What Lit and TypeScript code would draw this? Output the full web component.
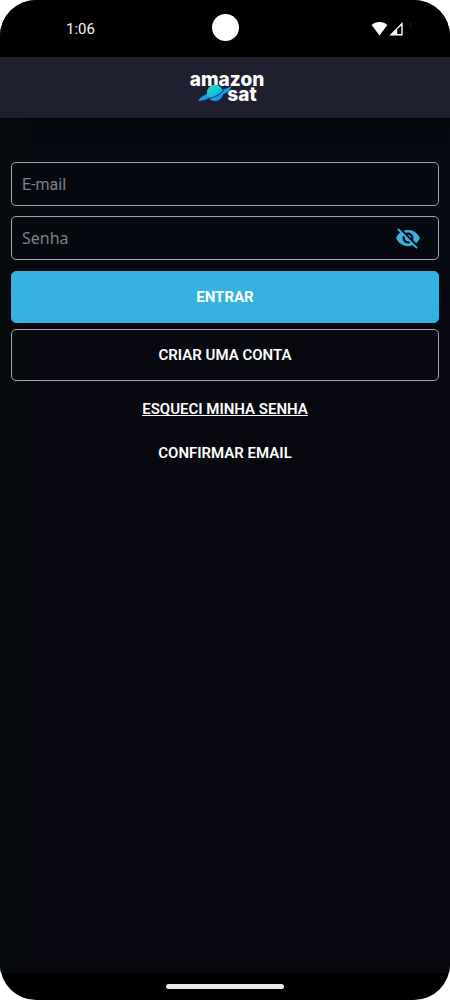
import { LitElement, html, css } from "lit";
import { customElement, state } from "lit/decorators.js";

@customElement("status-bar")
class StatusBar extends LitElement {
  static styles = css`
    :host {
      display: grid;
      grid-template-columns: 1fr auto 1fr;
      align-items: center;
      height: 57px;
      box-sizing: border-box;
      padding: 0 36px 0 66px;
      background: #000;
      color: #f4f4f4;
      font-size: 15px;
      position: relative;
    }
    .icons {
      grid-column: 3;
      justify-self: end;
      display: block;
    }
    .camera {
      position: absolute;
      left: 50%;
      top: 14px;
      width: 27px;
      height: 27px;
      margin-left: -13px;
      border-radius: 50%;
      background: #fff;
    }
  `;

  render() {
    return html`
      <span>1:06</span>
      <span class="camera"></span>
      <svg class="icons" width="43" height="16" viewBox="0 0 43 16" aria-hidden="true">
        <path fill="#fff" d="M0.6 4C4.6 -0.1 12.400 -0.1 16.400 4L8.500 14.400Z" />
        <path fill="#fff" fill-rule="evenodd" d="M18.300 14.500L31.700 1V14.500ZM26.200 8.300V13H30.300V4.400Z" />
        <path fill="#333" d="M39 2h1v1.500h-1zM39 5h1v1.500h-1z" />
      </svg>
    `;
  }
}

@customElement("brand-logo")
class BrandLogo extends LitElement {
  static styles = css`
    :host {
      display: block;
    }
    .logo {
      display: block;
    }
    .word {
      fill: #fff;
      font: 800 19px Inter, sans-serif;
    }
  `;

  render() {
    return html`
      <svg class="logo" width="84" height="42" viewBox="0 0 84 42" role="img" aria-label="amazon sat">
        <defs>
          <linearGradient id="planet" x1="0" y1="0" x2="0.7" y2="1">
            <stop offset="0.1" stop-color="#22e0a8" />
            <stop offset="0.5" stop-color="#14c4dc" />
            <stop offset="1" stop-color="#1688f0" />
          </linearGradient>
        </defs>
        <text class="word" x="44" y="19" text-anchor="middle">amazon</text>
        <path
          fill="#189ee8"
          d="M15 34C16.500 31 20 28.500 24 27L40 22.500C43 21.800 46 20.500 48.500 19.500C47 23.500 43 26.500 39 28L23 32.500C20.500 33 17.500 34 15 34Z"
        />
        <circle cx="32" cy="26" r="8.200" fill="url(#planet)" />
        <path fill="none" stroke="#1e1f2f" stroke-width="0.9" d="M24.500 31.500C31 31 38 27.500 41 22.500" />
        <text class="word" x="59" y="34" text-anchor="middle">sat</text>
      </svg>
    `;
  }
}

@customElement("login-form")
class LoginForm extends LitElement {
  @state() private revealed = false;

  static styles = css`
    :host {
      display: block;
    }
    .form {
      display: flex;
      flex-direction: column;
      padding: 44px 11px;
    }
    .field {
      display: flex;
      align-items: center;
      height: 44px;
      box-sizing: border-box;
      margin-bottom: 10px;
      border: 1px solid #a4a4a8;
      border-radius: 5px;
      background: #05090f;
    }
    .field + .field {
      margin-bottom: 11px;
    }
    .input {
      flex: 1;
      min-width: 0;
      height: 100%;
      box-sizing: border-box;
      padding: 0 10px;
      border: 0;
      outline: 0;
      background: none;
      color: #fff;
      font: 16px Roboto, sans-serif;
    }
    .password {
      font-family: "Noto Sans", sans-serif;
    }
    .input::placeholder {
      color: #7e8084;
      opacity: 1;
    }
    .eye {
      display: flex;
      padding: 0;
      margin-right: 17px;
      border: 0;
      background: none;
      color: #35b2e0;
      cursor: pointer;
    }
    .button {
      height: 52px;
      margin: 0 0 6px;
      padding: 0;
      border: 1px solid #a4a4a8;
      border-radius: 5px;
      background: none;
      color: #fff;
      font: 600 15px Roboto, sans-serif;
      cursor: pointer;
    }
    .primary {
      border-color: #35b2e0;
      background: #35b2e0;
      font-weight: 700;
    }
    .links {
      display: flex;
      flex-direction: column;
      align-items: center;
      gap: 20px;
      padding-top: 10px;
    }
    .link {
      color: #fff;
      font-size: 15px;
      font-weight: 600;
      line-height: 24px;
      text-decoration: none;
    }
    .underlined {
      text-decoration: underline;
      text-decoration-thickness: 1px;
      text-decoration-skip-ink: none;
    }
  `;

  render() {
    return html`
      <form class="form" @submit=${(e: Event) => e.preventDefault()}>
        <label class="field">
          <input class="input" id="email" type="email" placeholder="E-mail" aria-label="E-mail" />
        </label>
        <div class="field">
          <input
            class="input password"
            id="password"
            type=${this.revealed ? "text" : "password"}
            placeholder="Senha"
            aria-label="Senha"
          />
          <button
            class="eye"
            type="button"
            aria-label="Mostrar senha"
            aria-pressed=${this.revealed ? "true" : "false"}
            @click=${() => (this.revealed = !this.revealed)}
          >
            <svg width="26" height="26" viewBox="0 0 24 24" fill="currentColor" aria-hidden="true">
              <path
                d="M12 7c2.760 0 5 2.240 5 5 0 .65-.13 1.260-.36 1.830l2.920 2.920c1.510-1.260 2.700-2.890 3.430-4.750-1.730-4.390-6-7.500-11-7.500-1.400 0-2.740.25-3.980.7l2.160 2.160C10.740 7.130 11.350 7 12 7zM2 4.270l2.280 2.280.46.46C3.080 8.300 1.780 10.020 1 12c1.730 4.390 6 7.500 11 7.500 1.550 0 3.030-.3 4.380-.84l.42.42L19.730 22 21 20.730 3.270 3 2 4.270zM7.530 9.800l1.550 1.550c-.05.21-.08.43-.08.65 0 1.660 1.340 3 3 3 .22 0 .44-.03.65-.08l1.550 1.550c-.67.33-1.410.53-2.200.53-2.760 0-5-2.240-5-5 0-.79.2-1.530.53-2.200zm4.310-.78l3.150 3.150.02-.16c0-1.660-1.340-3-3-3l-.17.01z"
              />
            </svg>
          </button>
        </div>
        <button class="button primary" type="submit">ENTRAR</button>
        <button class="button" type="button">CRIAR UMA CONTA</button>
        <nav class="links">
          <a class="link underlined" href="#senha">ESQUECI MINHA SENHA</a>
          <a class="link" href="#confirmar">CONFIRMAR EMAIL</a>
        </nav>
      </form>
    `;
  }
}

@customElement("app-root")
class AppRoot extends LitElement {
  static styles = css`
    :host {
      display: block;
      background: #fff;
      font-family: Roboto, sans-serif;
    }
    .screen {
      display: flex;
      flex-direction: column;
      min-height: 100vh;
      overflow: hidden;
      border-radius: 36px;
      background: #000;
    }
    .header {
      display: flex;
      justify-content: center;
      align-items: center;
      height: 61px;
      background: #1e1f2f;
    }
    .main {
      flex: 1;
      background: linear-gradient(90deg, #050b0b, rgba(8, 8, 16, 0) 36px),
        linear-gradient(#05090f, #080810 260px);
    }
    .home {
      display: flex;
      justify-content: center;
      align-items: center;
      height: 27px;
    }
    .handle {
      width: 118px;
      height: 5px;
      border-radius: 3px;
      background: #e8e8e8;
    }
  `;

  render() {
    return html`
      <div class="screen">
        <status-bar></status-bar>
        <header class="header"><brand-logo></brand-logo></header>
        <main class="main"><login-form></login-form></main>
        <footer class="home"><span class="handle"></span></footer>
      </div>
    `;
  }
}
